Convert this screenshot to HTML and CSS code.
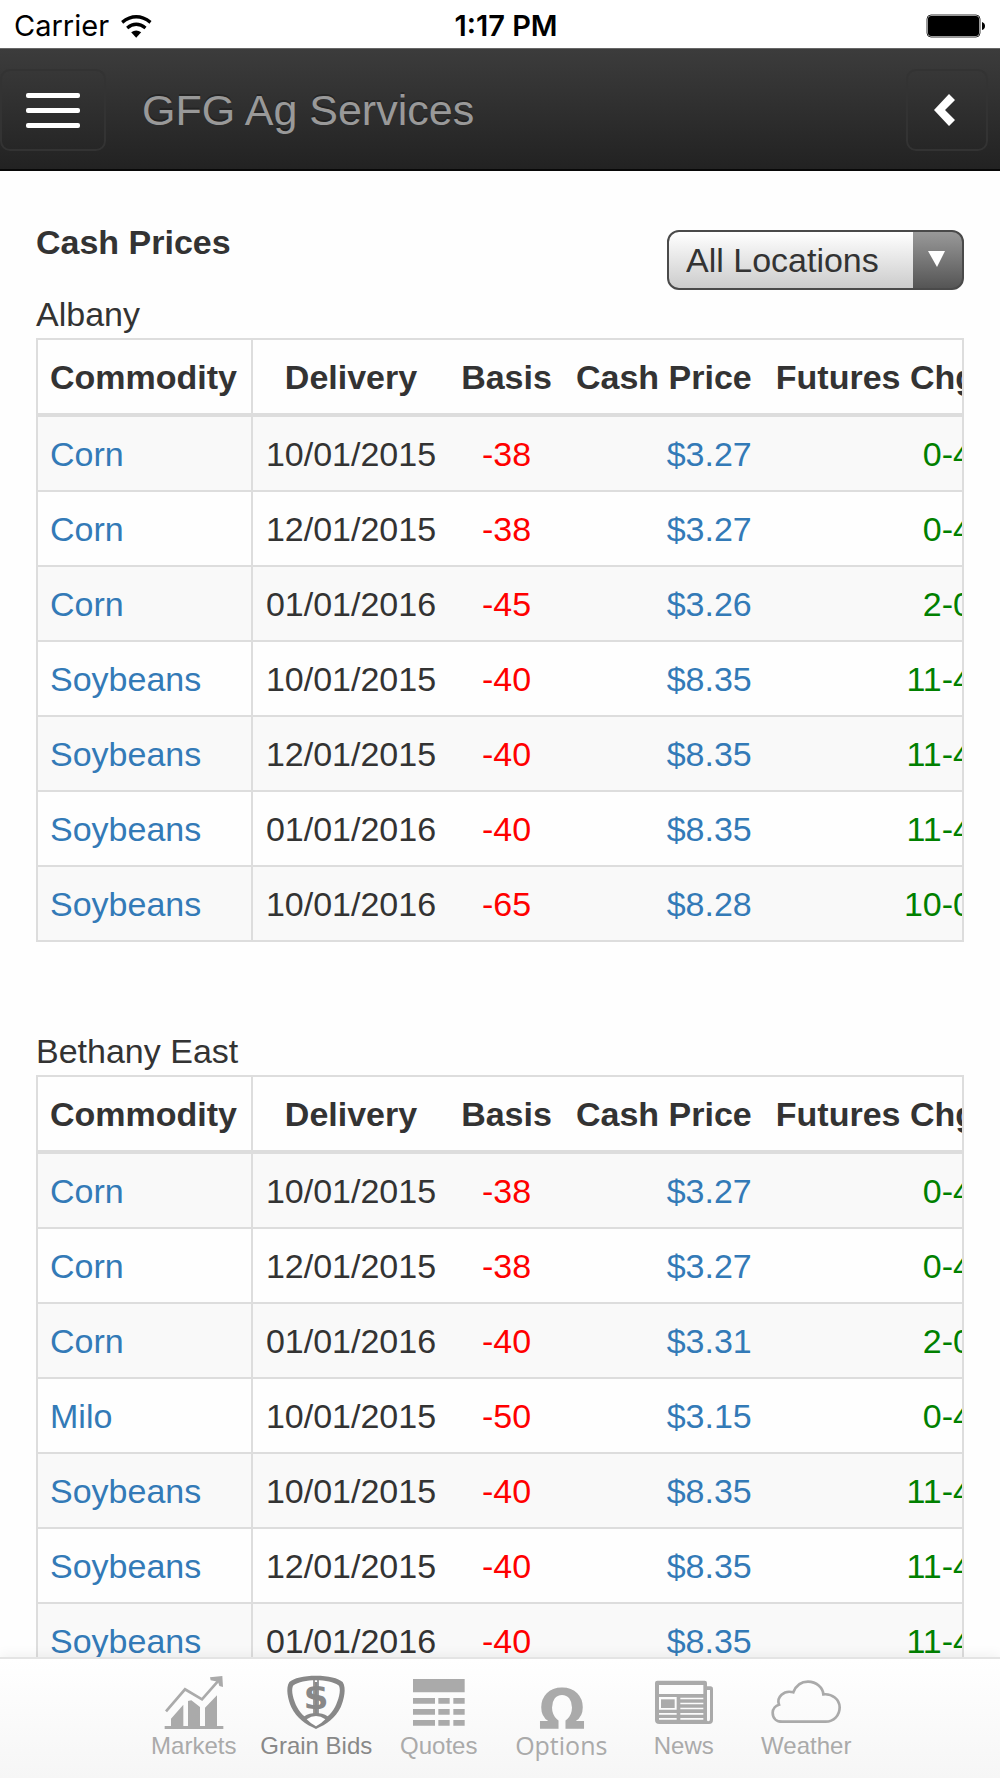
FILE: index.html
```html
<!DOCTYPE html>
<html lang="en">
<head>
<meta charset="utf-8">
<meta name="viewport" content="width=device-width, initial-scale=1">
<title>GFG Ag Services - Cash Prices</title>
<link rel="stylesheet" href="styles.css">
</head>
<body class="app">
  <div class="status">
    <div class="status-left">
      <span>Carrier</span>
      <svg class="wifi" viewBox="362 36 92 69" aria-hidden="true">
        <path d="M365 58Q407 25 450 58" fill="none" stroke="#000" stroke-width="10"/>
        <path d="M380 75Q407 53 435 75" fill="none" stroke="#000" stroke-width="10"/>
        <path d="M392 88Q407 77 422 88L407 104Z"/>
      </svg>
    </div>
    <span class="status-time">1:17 PM</span>
    <svg class="battery" viewBox="0 0 60 24" aria-hidden="true">
      <rect x="1" y="1" width="53" height="22" rx="4" fill="none" stroke="#333" stroke-width="1"/>
      <rect x="2" y="2" width="51" height="20" rx="3"/>
      <path d="M56 8Q59 9 59 12T56 16Z"/>
    </svg>
  </div>

  <header class="navbar">
    <button class="nav-button nav-menu" type="button" aria-label="Menu">
      <span class="bar"></span><span class="bar"></span><span class="bar"></span>
    </button>
    <a class="brand" href="#">GFG Ag Services</a>
    <button class="nav-button nav-back" type="button" aria-label="Back">
      <svg class="chevron" viewBox="0 0 22 32" aria-hidden="true"><path d="M0 16L15 0L21 6L11 16L21 26L15 32Z" fill="#fff"/></svg>
    </button>
  </header>

  <main class="content">
    <div class="heading-row">
      <h1 class="title">Cash Prices</h1>
      <div class="location">
        <select class="location-select" aria-label="Location">
          <option>All Locations</option>
          <option>Albany</option>
          <option>Bethany East</option>
        </select>
        <svg class="location-arrow" viewBox="0 0 17 16" aria-hidden="true"><path d="M0 0H17L9 16Z" fill="#fff"/></svg>
      </div>
    </div>

    <section class="site">
      <h2 class="site-name">Albany</h2>
      <div class="table-wrap">
        <table class="prices">
          <thead><tr><th>Commodity</th><th>Delivery</th><th>Basis</th><th>Cash Price</th><th>Futures Chg</th></tr></thead>
          <tbody>
            <tr><td><a href="#">Corn</a></td><td>10/01/2015</td><td>-38</td><td><a href="#">$3.27</a></td><td>0-4</td></tr>
            <tr><td><a href="#">Corn</a></td><td>12/01/2015</td><td>-38</td><td><a href="#">$3.27</a></td><td>0-4</td></tr>
            <tr><td><a href="#">Corn</a></td><td>01/01/2016</td><td>-45</td><td><a href="#">$3.26</a></td><td>2-0</td></tr>
            <tr><td><a href="#">Soybeans</a></td><td>10/01/2015</td><td>-40</td><td><a href="#">$8.35</a></td><td>11-4</td></tr>
            <tr><td><a href="#">Soybeans</a></td><td>12/01/2015</td><td>-40</td><td><a href="#">$8.35</a></td><td>11-4</td></tr>
            <tr><td><a href="#">Soybeans</a></td><td>01/01/2016</td><td>-40</td><td><a href="#">$8.35</a></td><td>11-4</td></tr>
            <tr><td><a href="#">Soybeans</a></td><td>10/01/2016</td><td>-65</td><td><a href="#">$8.28</a></td><td>10-0</td></tr>
          </tbody>
        </table>
      </div>
    </section>

    <section class="site">
      <h2 class="site-name">Bethany East</h2>
      <div class="table-wrap">
        <table class="prices">
          <thead><tr><th>Commodity</th><th>Delivery</th><th>Basis</th><th>Cash Price</th><th>Futures Chg</th></tr></thead>
          <tbody>
            <tr><td><a href="#">Corn</a></td><td>10/01/2015</td><td>-38</td><td><a href="#">$3.27</a></td><td>0-4</td></tr>
            <tr><td><a href="#">Corn</a></td><td>12/01/2015</td><td>-38</td><td><a href="#">$3.27</a></td><td>0-4</td></tr>
            <tr><td><a href="#">Corn</a></td><td>01/01/2016</td><td>-40</td><td><a href="#">$3.31</a></td><td>2-0</td></tr>
            <tr><td><a href="#">Milo</a></td><td>10/01/2015</td><td>-50</td><td><a href="#">$3.15</a></td><td>0-4</td></tr>
            <tr><td><a href="#">Soybeans</a></td><td>10/01/2015</td><td>-40</td><td><a href="#">$8.35</a></td><td>11-4</td></tr>
            <tr><td><a href="#">Soybeans</a></td><td>12/01/2015</td><td>-40</td><td><a href="#">$8.35</a></td><td>11-4</td></tr>
            <tr><td><a href="#">Soybeans</a></td><td>01/01/2016</td><td>-40</td><td><a href="#">$8.35</a></td><td>11-4</td></tr>
          </tbody>
        </table>
      </div>
    </section>
  </main>

  <nav class="tabbar" aria-label="Sections">
    <div class="tabs">
      <a class="tab" href="#">
        <svg class="tab-icon" viewBox="84 105 216 162" aria-hidden="true">
          <path d="M108 214L165 148L216 178L268 119" fill="none" stroke="currentColor" stroke-width="8"/>
          <path d="M240 112L277 108L279 141L268 138L264 125L242 121Z"/>
          <path d="M123 258V236L160 194V258ZM174 258V183L184 181L210 201V258ZM225 258V203L261 166V258ZM104 258H280V267H104Z"/>
        </svg>
        <span>Markets</span>
      </a>
      <a class="tab tab-active" href="#">
        <svg class="tab-icon" viewBox="450 105 216 162" aria-hidden="true">
          <path fill-rule="evenodd" d="M558 107C595 107 625 114 638 126C650 145 642 178 632 202C615 236 590 253 558 267C526 253 501 236 484 202C474 178 466 145 478 126C491 114 521 107 558 107ZM558 121C530 121 505 126 489 137C482 153 491 180 501 201C507 213 515 222 523 229C543 216 573 216 593 229C601 222 609 213 615 201C625 180 634 153 627 137C611 126 586 121 558 121Z"/>
          <path d="M530 238Q558 218 586 238Q574 251 558 259Q542 251 530 238Z" fill="#fff"/>
          <text class="icon-dollar" x="558" y="208" text-anchor="middle">$</text>
          <path d="M552 118V222M564 118V222" fill="none" stroke="currentColor" stroke-width="5"/>
        </svg>
        <span>Grain Bids</span>
      </a>
      <a class="tab" href="#">
        <svg class="tab-icon" viewBox="819 105 216 162" aria-hidden="true">
          <path d="M849 117H1004V157H849ZM849 174H915V191H849ZM925 174H959V191H925ZM970 174H1004V191H970ZM849 207H915V224H849ZM925 207H959V224H925ZM970 207H1004V224H970ZM849 240H915V257H849ZM925 240H959V257H925ZM970 240H1004V257H970Z"/>
        </svg>
        <span>Quotes</span>
      </a>
      <a class="tab tab-options" href="#">
        <svg class="tab-icon" viewBox="105 105 216 162" aria-hidden="true">
          <text class="icon-omega" x="216" y="264" text-anchor="middle">Ω</text>
        </svg>
        <span>Options</span>
      </a>
      <a class="tab" href="#">
        <svg class="tab-icon" viewBox="474 105 216 162" aria-hidden="true">
          <path fill-rule="evenodd" d="M502 122H644Q651 122 651 129V139H661Q669 139 669 147V240Q669 252 657 252H508Q495 252 495 240V129Q495 122 502 122ZM507 135V162H640V135ZM651 150V240Q651 244 655 244Q660 244 660 238V150ZM507 171V209H560V171ZM571 173V178H640V173ZM571 188V193H640V188ZM571 203V208H640V203ZM507 219V224H560V219ZM571 219V224H640V219ZM507 234V239H560V234ZM571 234V239H640V234Z"/>
          <path d="M513 178H554V204H513Z"/>
        </svg>
        <span>News</span>
      </a>
      <a class="tab" href="#">
        <svg class="tab-icon" viewBox="843 105 216 162" aria-hidden="true">
          <path d="M880 245C862 245 851 234 851 218C851 206 860 197 870 194C862 172 884 149 913 157C921 137 937 125 957 125C982 125 1002 143 1003 163C1029 160 1052 178 1052 202C1052 227 1034 245 1010 245Z" fill="none" stroke="currentColor" stroke-width="8"/>
        </svg>
        <span>Weather</span>
      </a>
    </div>
  </nav>
</body>
</html>
```

FILE: styles.css
```css
* {
  box-sizing: border-box;
}

.app {
  display: flex;
  flex-direction: column;
  height: 100vh;
  margin: 0;
  background: #fefefe;
  color: #333;
  font-family: "Liberation Sans", Arial, sans-serif;
  font-size: 34px;
  line-height: 48px;
}

.app a {
  text-decoration: none;
}

/* Device status bar */
.status {
  display: grid;
  grid-template-columns: 1fr auto 1fr;
  align-items: center;
  flex: none;
  height: 48px;
  padding: 2px 14px 0;
  background: #fff;
  color: #000;
  font-family: Inter, sans-serif;
  font-size: 29px;
}

.status-left {
  display: flex;
  align-items: center;
  gap: 12px;
}

.status-time {
  margin-left: 12px;
  font-weight: 600;
}

.wifi {
  width: 31px;
  height: 23px;
}

.battery {
  justify-self: end;
  width: 60px;
  height: 24px;
}

/* Navigation bar */
.navbar {
  display: flex;
  align-items: center;
  flex: none;
  height: 123px;
  padding: 2px 12px 0 0;
  border-top: 1px solid #666;
  border-bottom: 2px solid #080808;
  background: linear-gradient(#3c3c3c, #222);
}

.nav-button {
  display: flex;
  align-items: center;
  justify-content: center;
  height: 82px;
  padding: 0;
  border: 2px solid #333;
  border-radius: 10px;
  background: transparent;
}

.nav-menu {
  flex-direction: column;
  gap: 10px;
  width: 106px;
}

.bar {
  width: 54px;
  height: 5px;
  border-radius: 2px;
  background: #fff;
}

.brand {
  flex: 1;
  margin-left: 36px;
  color: #999;
  font-size: 43px;
  text-shadow: 0 -2px 0 rgba(0, 0, 0, 0.25);
}

.nav-back {
  width: 82px;
  padding-right: 4px;
}

.chevron {
  width: 22px;
  height: 32px;
}

/* Page content */
.content {
  flex: 1;
  min-height: 0;
  padding: 47px 36px 0;
  overflow-y: auto;
  scrollbar-width: none;
}

.heading-row {
  display: flex;
  justify-content: space-between;
  align-items: flex-start;
}

.title,
.site-name {
  margin: 0;
  font-size: 34px;
}

.site-name {
  font-weight: 400;
}

.location {
  position: relative;
  margin-top: 12px;
  height: 60px;
}

.location-select {
  appearance: none;
  width: 297px;
  height: 60px;
  padding: 0 50px 0 17px;
  border: 2px solid #4a4a4a;
  border-radius: 12px;
  background:
    linear-gradient(#999, #555) right / 49px 100% no-repeat,
    linear-gradient(#fff, #ccc);
  color: #333;
  font: inherit;
}

.location-arrow {
  position: absolute;
  top: 21px;
  right: 19px;
  width: 17px;
  height: 16px;
  pointer-events: none;
}

.site + .site {
  margin-top: 85px;
}

.table-wrap {
  border: 2px solid #ddd;
  overflow-x: auto;
  scrollbar-width: none;
}

.prices {
  border-collapse: separate;
  border-spacing: 0;
  white-space: nowrap;
}

.prices th,
.prices td {
  height: 75px;
  padding: 0 12px;
  border-bottom: 2px solid #ddd;
  text-align: center;
}

.prices th {
  height: 77px;
  border-bottom-width: 4px;
}

.prices tr > :first-child {
  min-width: 215px;
  border-right: 2px solid #ddd;
  text-align: left;
}

.prices th:nth-child(2) {
  min-width: 196px;
}

.prices th:nth-child(3) {
  min-width: 115px;
}

.prices tr > :nth-child(n + 4) {
  text-align: right;
}

.prices th:last-child {
  padding-right: 8px;
}

.prices tbody tr:nth-child(odd) {
  background: #f9f9f9;
}

.prices tbody tr:last-child td {
  height: 73px;
  border-bottom: 0;
}

.prices a {
  color: #337ab7;
}

.prices td:nth-child(3) {
  color: #f00;
}

.prices td:nth-child(5) {
  color: #008000;
}

/* Bottom tab bar */
.tabbar {
  position: relative;
  flex: none;
  height: 121px;
  padding: 16px 0 0;
  border-top: 2px solid #e4e4e4;
  background: linear-gradient(#fff, #f6f6f6);
  box-shadow: 0 -2px 12px rgba(0, 0, 0, 0.06);
}

.tabs {
  display: grid;
  grid-template-columns: repeat(6, 1fr);
  max-width: 735px;
  margin: 0 auto;
}

.tab {
  display: flex;
  flex-direction: column;
  align-items: center;
  color: #aaa;
  font-size: 24px;
  line-height: 34px;
  white-space: nowrap;
}

.tab-active {
  color: #888;
}

.tab-options {
  font-family: "Open Sans", sans-serif;
  font-size: 25px;
  line-height: 32px;
}

.tab-icon {
  width: 72px;
  height: 54px;
  fill: currentColor;
}

.icon-dollar {
  font-family: "DejaVu Sans", sans-serif;
  font-size: 108px;
  font-weight: 700;
}

.icon-omega {
  font-family: "DejaVu Sans", sans-serif;
  font-size: 166px;
  font-weight: 700;
}
```
